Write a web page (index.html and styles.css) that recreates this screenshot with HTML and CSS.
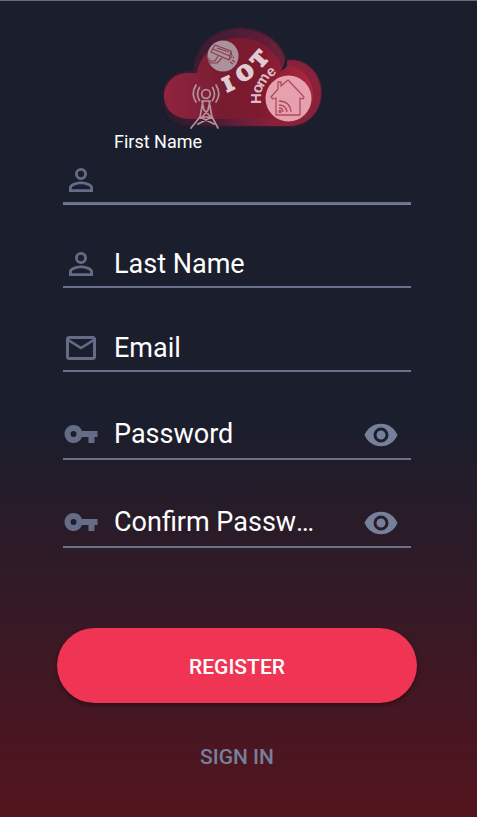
FILE: index.html
```html
<!DOCTYPE html>
<html lang="en">
<head>
<meta charset="utf-8">
<meta name="viewport" content="width=device-width, initial-scale=1">
<title>Register</title>
<link rel="stylesheet" href="styles.css">
</head>
<body>
<main class="screen">
  <svg class="logo" viewBox="158 25 168 106" role="img" aria-label="IOT Home">
    <defs>
      <linearGradient id="halo" x1="0" x2="1"><stop offset="0" stop-color="#2a1a2d"/><stop offset=".35" stop-color="#461c34"/><stop offset=".7" stop-color="#652039"/><stop offset="1" stop-color="#87203a"/></linearGradient>
      <linearGradient id="core" x1="0" x2="1"><stop offset="0" stop-color="#90243f"/><stop offset=".22" stop-color="#842039"/><stop offset=".4" stop-color="#781b30"/><stop offset=".65" stop-color="#7e1a2f"/><stop offset="1" stop-color="#b02641"/></linearGradient>
      <linearGradient id="edge" x1="0" x2="1"><stop offset="0" stop-color="#8a213b" stop-opacity="0"/><stop offset=".6" stop-color="#8a213b"/><stop offset="1" stop-color="#8a213b"/></linearGradient>
      <filter id="soft" x="-10%" y="-10%" width="120%" height="120%"><feGaussianBlur stdDeviation="1"/></filter>
    </defs>
    <path d="M188 71L193 71C196 43 215 28 241 28C264 29 282 43 286 61C304 57 321 72 321 93C321 112 307 126 289 126H188C172 126 162 114 162 97C162 81 173 71 188 71Z" fill="url(#halo)" filter="url(#soft)"/>
    <path d="M286 61C304 57 321 72 321 93C321 112 307 126 289 126H215V119H289C303 118 313 107 313 94C313 79 302 68 286 69Z" fill="url(#edge)"/>
    <path d="M188 73H197C201 52 219 38 239 38C258 38 275 48 281 67C299 63 313 78 313 94C313 109 302 119 288 119H188C174 118 164 109 164 96C164 83 174 73 188 73Z" fill="url(#core)"/>
    <path d="M287 60V66Q284 70 280 71Q285 66 285 58Z" fill="#1b1e2c"/>
    <circle cx="223" cy="56" r="15.5" fill="#ab929b"/>
    <g fill="none" stroke="#8b3a4d" stroke-width="1.1" stroke-linejoin="round">
      <path d="M215 45L231 51L229 60L211 52ZM213 49L230 56M217 48L229 52M218 56L215 61H209M209 58V63H217L222 58M231 51L232 56L229 60M230 62L233 64M232 60L235 62M233 57L234 58"/>
    </g>
    <g fill="none" stroke="#b4929d" stroke-width="1.7" stroke-linecap="round">
      <circle cx="206" cy="94" r="4.3"/>
      <path d="M199.500 87.500Q195.500 94 199.500 100.500M212.500 87.500Q216.500 94 212.500 100.500M196 85Q190.500 94 196 102M216 85Q221.500 94 216 102"/>
      <path d="M202 101H210L208 110L203 116M202 101L204 110L210 116M203 101L200 117L191 128M209 101L212 117L218 128M200 117H212M200 117L214 124M212 117L198 124"/>
    </g>
    <circle cx="288.500" cy="98.500" r="23" fill="#e7a0ad"/>
    <g fill="none" stroke="#ac4d61" stroke-width="1.3" stroke-linejoin="round">
      <path d="M276 98L273 99L271 97L278 89V82H281V86L288 80L304 97L303 99L300 98V115H276Z"/>
      <path d="M279 101Q290 101 291 112M279 105Q286 105 287 112M279 108Q283 108 283 112"/>
      <circle cx="280" cy="111.500" r="1"/>
    </g>
    <text class="logo-iot" x="227 242 260" y="92 83 69" rotate="-25 -35 -48">IOT</text>
    <text class="logo-home" x="261 261 263 271" y="104 94 88 78" rotate="-90 -75 -58 -42">Home</text>
  </svg>

  <form class="form">
    <div class="field field-active">
      <label class="field-label" for="first-name">First Name</label>
      <div class="control">
        <svg class="icon" viewBox="0 0 24 24" aria-hidden="true"><path d="M12 5.900a2.100 2.100 0 1 1 0 4.200 2.100 2.100 0 0 1 0-4.200m0 9c2.970 0 6.100 1.460 6.100 2.100v1.100H5.900V17c0-.640 3.130-2.100 6.100-2.100M12 4a4 4 0 1 0 0 8 4 4 0 0 0 0-8zm0 9c-2.670 0-8 1.340-8 4v3h16v-3c0-2.660-5.330-4-8-4z"/></svg>
        <input class="input" id="first-name" type="text" autocomplete="given-name">
      </div>
    </div>
    <div class="field control">
      <svg class="icon" viewBox="0 0 24 24" aria-hidden="true"><path d="M12 5.900a2.100 2.100 0 1 1 0 4.200 2.100 2.100 0 0 1 0-4.200m0 9c2.970 0 6.100 1.460 6.100 2.100v1.100H5.900V17c0-.640 3.130-2.100 6.100-2.100M12 4a4 4 0 1 0 0 8 4 4 0 0 0 0-8zm0 9c-2.670 0-8 1.340-8 4v3h16v-3c0-2.660-5.330-4-8-4z"/></svg>
      <input class="input" type="text" placeholder="Last Name" aria-label="Last Name" autocomplete="family-name">
    </div>
    <div class="field control">
      <svg class="icon" viewBox="0 0 24 24" aria-hidden="true"><path d="M22 6c0-1.100-.9-2-2-2H4c-1.100 0-2 .9-2 2v12c0 1.100.9 2 2 2h16c1.100 0 2-.9 2-2V6zm-2 0-8 5-8-5h16zm0 12H4V8l8 5 8-5v10z"/></svg>
      <input class="input" type="email" placeholder="Email" aria-label="Email" autocomplete="email">
    </div>
    <div class="field control control-tall">
      <svg class="icon" viewBox="0 0 24 24" aria-hidden="true"><path d="M12.650 10A6 6 0 0 0 7 6a6 6 0 1 0 5.650 8H17v4h4v-4h2v-4H12.650zM7 14a2 2 0 1 1 0-4 2 2 0 0 1 0 4z"/></svg>
      <input class="input input-secret" type="password" placeholder="Password" aria-label="Password" autocomplete="new-password">
      <button class="reveal" type="button" aria-label="Show password"><svg class="icon" viewBox="0 0 24 24" aria-hidden="true"><path d="M12 4.500C7 4.500 2.730 7.610 1 12c1.730 4.390 6 7.500 11 7.500s9.270-3.110 11-7.500c-1.730-4.390-6-7.500-11-7.500zM12 17a5 5 0 1 1 0-10 5 5 0 0 1 0 10zm0-8a3 3 0 1 0 0 6 3 3 0 0 0 0-6z"/></svg></button>
    </div>
    <div class="field control control-tall">
      <svg class="icon" viewBox="0 0 24 24" aria-hidden="true"><path d="M12.650 10A6 6 0 0 0 7 6a6 6 0 1 0 5.650 8H17v4h4v-4h2v-4H12.650zM7 14a2 2 0 1 1 0-4 2 2 0 0 1 0 4z"/></svg>
      <input class="input input-secret" type="password" placeholder="Confirm Password" aria-label="Confirm Password" autocomplete="new-password">
      <button class="reveal" type="button" aria-label="Show confirmed password"><svg class="icon" viewBox="0 0 24 24" aria-hidden="true"><path d="M12 4.500C7 4.500 2.730 7.610 1 12c1.730 4.390 6 7.500 11 7.500s9.270-3.110 11-7.500c-1.730-4.390-6-7.500-11-7.500zM12 17a5 5 0 1 1 0-10 5 5 0 0 1 0 10zm0-8a3 3 0 1 0 0 6 3 3 0 0 0 0-6z"/></svg></button>
    </div>
    <button class="register" type="submit">REGISTER</button>
    <a class="sign-in" href="#sign-in">SIGN IN</a>
  </form>
</main>
</body>
</html>
```
FILE: styles.css
```css
* {
  box-sizing: border-box;
}

body {
  margin: 0;
  font-family: Roboto, "Liberation Sans", sans-serif;
  color: #fff;
}

.screen {
  display: flex;
  flex-direction: column;
  min-height: 100vh;
  padding: 24px 60px 24px 57px;
  border-top: 1px solid #6b706f;
  background: linear-gradient(#1b1e2c 52%, #54141e);
}

.logo {
  width: 168px;
  height: 106px;
  margin-left: 101px;
}

.logo-iot {
  font: bold 19px "DejaVu Serif", serif;
  fill: #e0cbd2;
  stroke: #e0cbd2;
  stroke-width: 2px;
}

.logo-home {
  font: bold 15px "Liberation Sans Narrow", "Liberation Sans", sans-serif;
  fill: #dfbcc5;
}

.form {
  display: flex;
  flex-direction: column;
}

.field {
  margin: 0 6px 38px;
}

.field-label {
  display: block;
  margin-left: 51px;
  font-size: 18px;
  line-height: 22px;
}

.field-active .control {
  margin-top: 5px;
  box-shadow: 0 1px #76809a;
}

.control {
  display: flex;
  align-items: center;
  height: 46px;
  border-bottom: 2px solid #69728c;
}

.control-tall {
  height: 50px;
}

.icon {
  display: block;
  flex: none;
  width: 36px;
  height: 36px;
  fill: #656c87;
}

.input {
  flex: 1;
  min-width: 0;
  height: 36px;
  margin-left: 15px;
  padding: 0;
  border: 0;
  outline: 0;
  background: none;
  color: #fff;
  font: 27px/36px Roboto, "Liberation Sans", sans-serif;
  text-overflow: ellipsis;
}

.input::placeholder {
  color: #fff;
  opacity: 1;
  text-overflow: ellipsis;
}

.input-secret {
  margin-right: 27px;
}

.reveal {
  padding: 2px 12px 0;
  border: 0;
  background: none;
}

.reveal .icon {
  fill: #76809a;
}

.register {
  height: 75px;
  margin-top: 42px;
  padding: 2px 0 0;
  border: 0;
  border-radius: 38px;
  background: #f03454;
  box-shadow: 0 2px 4px #0006;
  color: #fff;
  font: 500 21px/24px Roboto, "Liberation Sans", sans-serif;
}

.sign-in {
  align-self: center;
  margin-top: 42px;
  color: #76809a;
  font-size: 21px;
  font-weight: 500;
  line-height: 24px;
  text-decoration: none;
}
```
